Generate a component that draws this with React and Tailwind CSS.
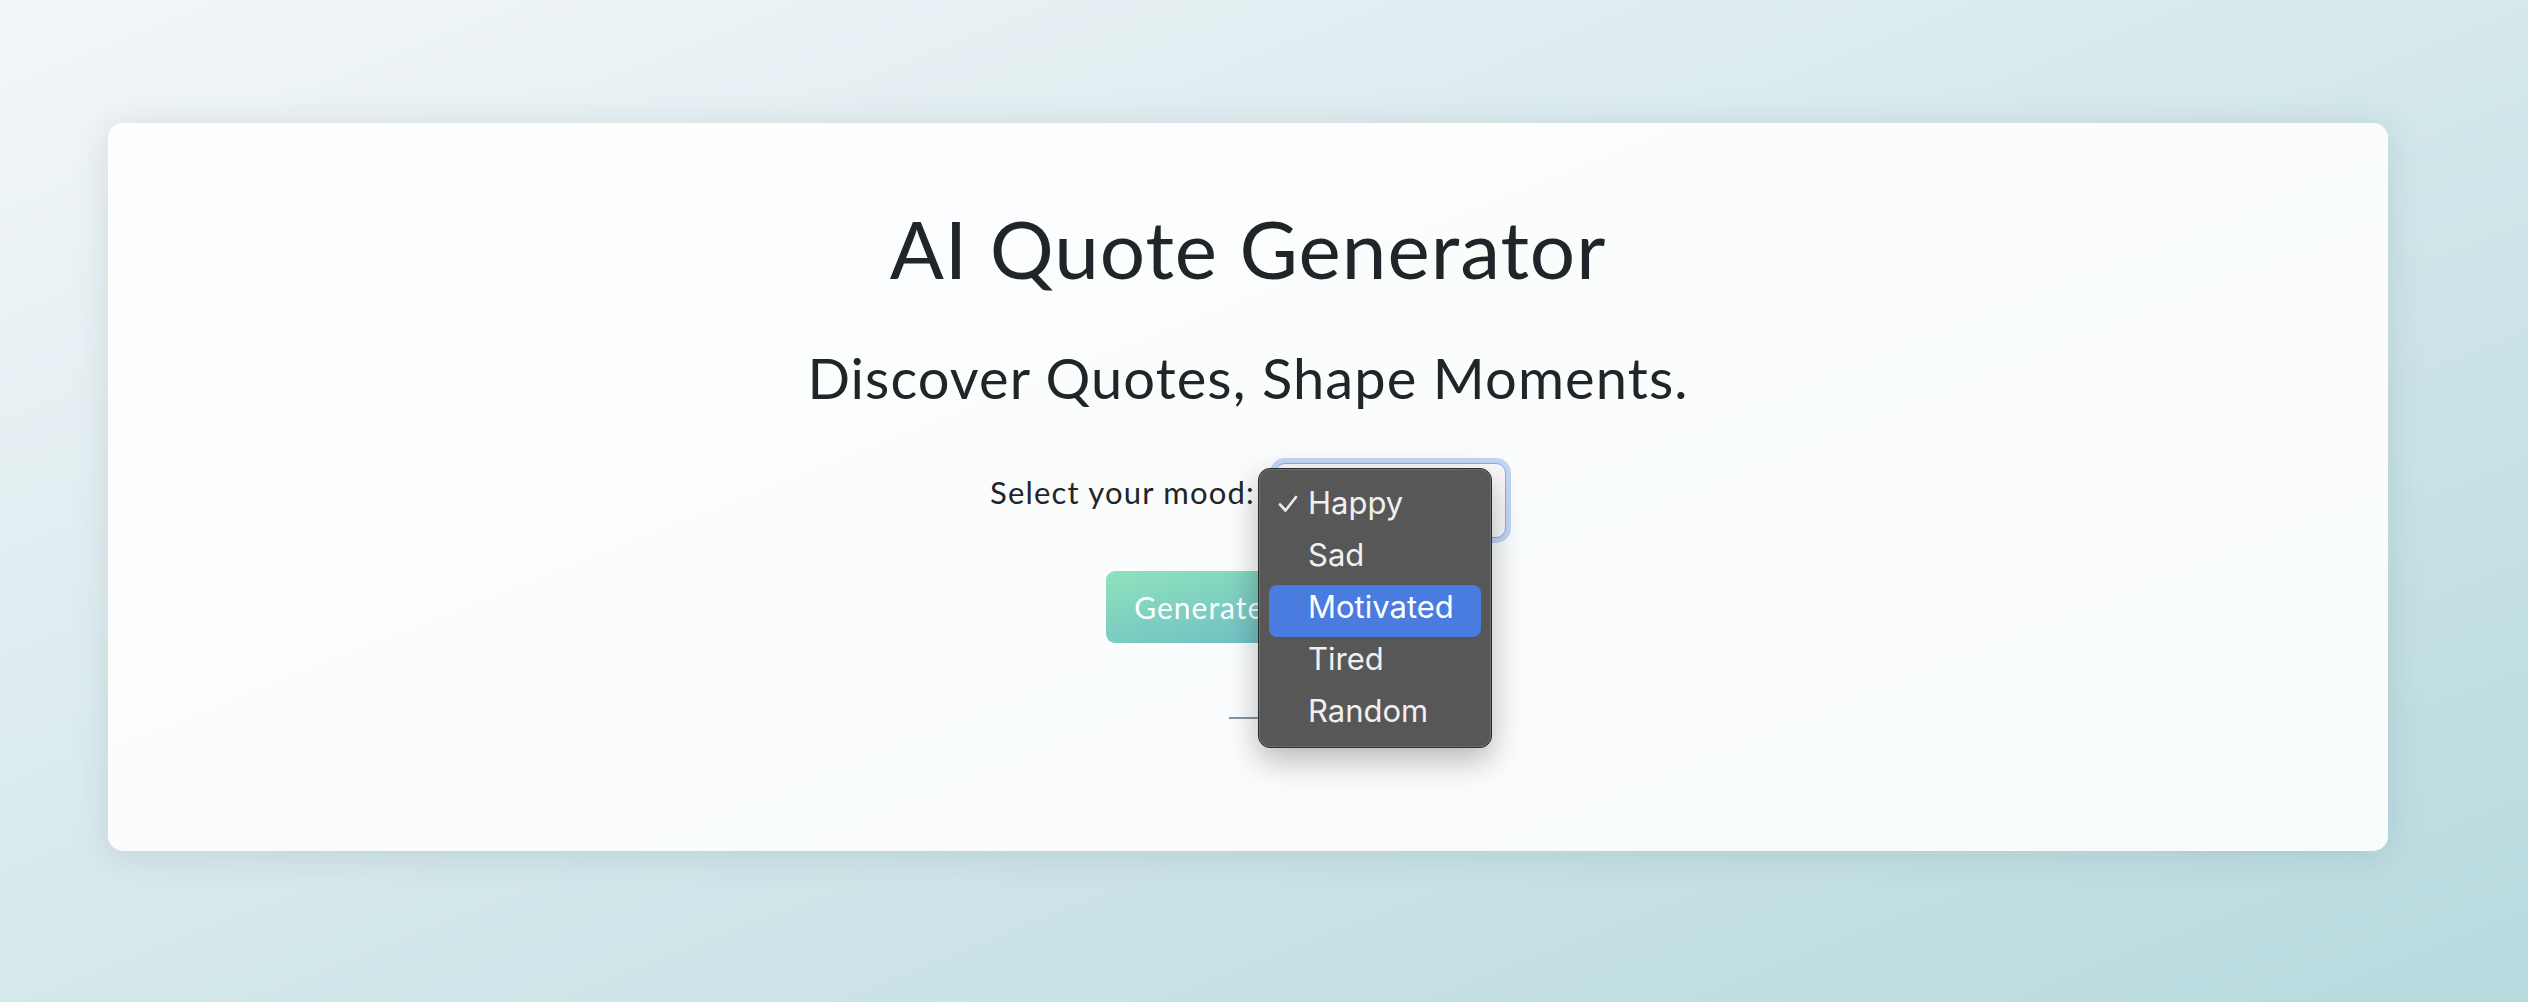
import React from "react";

const moods = ["Happy", "Sad", "Motivated", "Tired", "Random"];

export default function App() {
  const selected = "Happy";
  const hovered = "Motivated";

  return (
    <div className="min-h-screen w-full bg-[linear-gradient(to_bottom_right,#f3f6f9,#b7dade)] pt-[123px] pl-[108px] pr-[140px] font-['Lato',sans-serif] text-[#212529]">
      <div className="h-[728px] w-full rounded-[15px] bg-white/90 shadow-[0_4px_36px_rgba(40,60,80,0.13)] pt-[85px] flex flex-col items-center">
        <h1 className="text-[80px] leading-none font-normal tracking-[1px]">AI Quote Generator</h1>
        <h2 className="mt-[62px] text-[56px] leading-none font-normal tracking-[1.1px]">
          Discover Quotes, Shape Moments.
        </h2>

        <div className="mt-[57px] flex items-center gap-[20px] h-[75px]">
          <label className="text-[31px] leading-none pb-4 tracking-[1.2px]">Select your mood:</label>
          <div className="relative">
            <div className="w-[231px] h-[75px] rounded-[10px] border border-[#86acee] bg-[#f9f9fb] ring-[5px] ring-[#c3d6f6]" />

            {/* native select popup, open */}
            <div className="absolute left-[-17px] top-[5px] w-[234px] h-[280px] rounded-[12px] border border-[#2c2c2c] bg-[#575757] shadow-[0_12px_32px_rgba(0,0,0,0.28)] z-10">
              <div className="h-full w-full rounded-[11px] border border-[#6e6e6e] pt-[11px] px-[9px] font-['Inter',sans-serif]">
                {moods.map((m) => (
                  <div
                    key={m}
                    className={`relative h-[52px] rounded-[8px] leading-[43px] text-[31px] pl-[39px] ${
                      m === hovered ? "bg-[#4a7bdf] text-white" : "text-[#f0f0f0]"
                    }`}
                  >
                    {m === selected && (
                      <svg
                        className="absolute left-[9px] top-[14px]"
                        width="20"
                        height="18"
                        viewBox="0 0 20 18"
                        fill="none"
                      >
                        <path
                          d="M2 9.5 L7.5 15.5 L18 2"
                          stroke="#ececec"
                          strokeWidth="2.6"
                          strokeLinecap="round"
                          strokeLinejoin="round"
                        />
                      </svg>
                    )}
                    {m}
                  </div>
                ))}
              </div>
            </div>
          </div>
        </div>

        <button className="mt-[33px] w-[284px] h-[72px] rounded-[9px] bg-[linear-gradient(to_bottom_right,#8ee3bc,#68b4c8)] text-white text-[30px] leading-none tracking-[1px]">
          Generate Quote
        </button>

        <div className="mt-[74px] w-[38px] h-[2px] bg-[#8595a2]" />
      </div>
    </div>
  );
}
